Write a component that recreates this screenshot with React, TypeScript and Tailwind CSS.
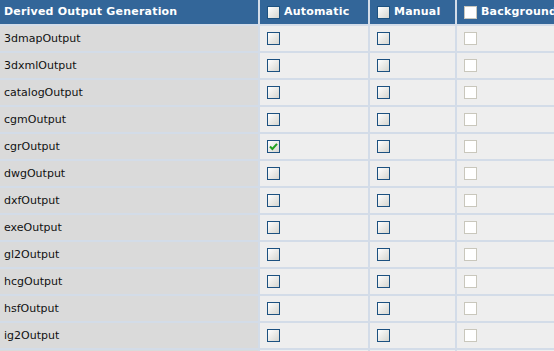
import React from "react";

const rows = [
  "3dmapOutput",
  "3dxmlOutput",
  "catalogOutput",
  "cgmOutput",
  "cgrOutput",
  "dwgOutput",
  "dxfOutput",
  "exeOutput",
  "gl2Output",
  "hcgOutput",
  "hsfOutput",
  "ig2Output",
  "",
];

function Box({ checked = false, disabled = false }: { checked?: boolean; disabled?: boolean }) {
  if (disabled) {
    return <div className="w-[13px] h-[13px] border border-[#c9c7bc] bg-white shrink-0" />;
  }
  return (
    <div className="w-[13px] h-[13px] border border-[#1c5180] bg-linear-to-br from-white to-[#d6d6d0] shrink-0 relative">
      {checked && (
        <svg className="absolute left-[1px] top-[1px]" width="9" height="9" viewBox="0 0 9 9">
          <path d="M1 4.5 L3.4 7 L8 1.8" stroke="#21a121" strokeWidth="2" fill="none" />
        </svg>
      )}
    </div>
  );
}

export default function App() {
  return (
    <div
      className="w-[554px] h-[351px] overflow-hidden bg-[#d3dce8]"
      style={{ fontFamily: '"DejaVu Sans", Verdana, sans-serif' }}
    >
      <div className="grid grid-cols-[258px_108px_85px_120px] auto-rows-[25px] grid-rows-[24px] gap-[2px] w-[577px] text-[11px]">
        <div className="bg-[#336699] text-white font-bold tracking-[0.2px] flex items-center pl-[4px]">Derived Output Generation</div>
        <div className="bg-[#336699] text-white font-bold tracking-[0.2px] flex items-center pl-[7px] gap-[4px]">
          <Box />
          <span>Automatic</span>
        </div>
        <div className="bg-[#336699] text-white font-bold tracking-[0.2px] flex items-center pl-[7px] gap-[4px]">
          <Box />
          <span>Manual</span>
        </div>
        <div className="bg-[#336699] text-white font-bold tracking-[0.2px] flex items-center pl-[7px] gap-[4px] whitespace-nowrap">
          <Box disabled />
          <span>Background</span>
        </div>
        {rows.map((r, i) => (
          <React.Fragment key={i}>
            <div className="bg-[#dadada] text-[#111] flex items-center pl-[4px] pt-[1px]">{r}</div>
            <div className="bg-[#eeeeee] flex items-center pl-[7px]">
              <Box checked={i === 4} />
            </div>
            <div className="bg-[#eeeeee] flex items-center pl-[7px]">
              <Box />
            </div>
            <div className="bg-[#eeeeee] flex items-center pl-[7px]">
              <Box disabled />
            </div>
          </React.Fragment>
        ))}
      </div>
    </div>
  );
}
